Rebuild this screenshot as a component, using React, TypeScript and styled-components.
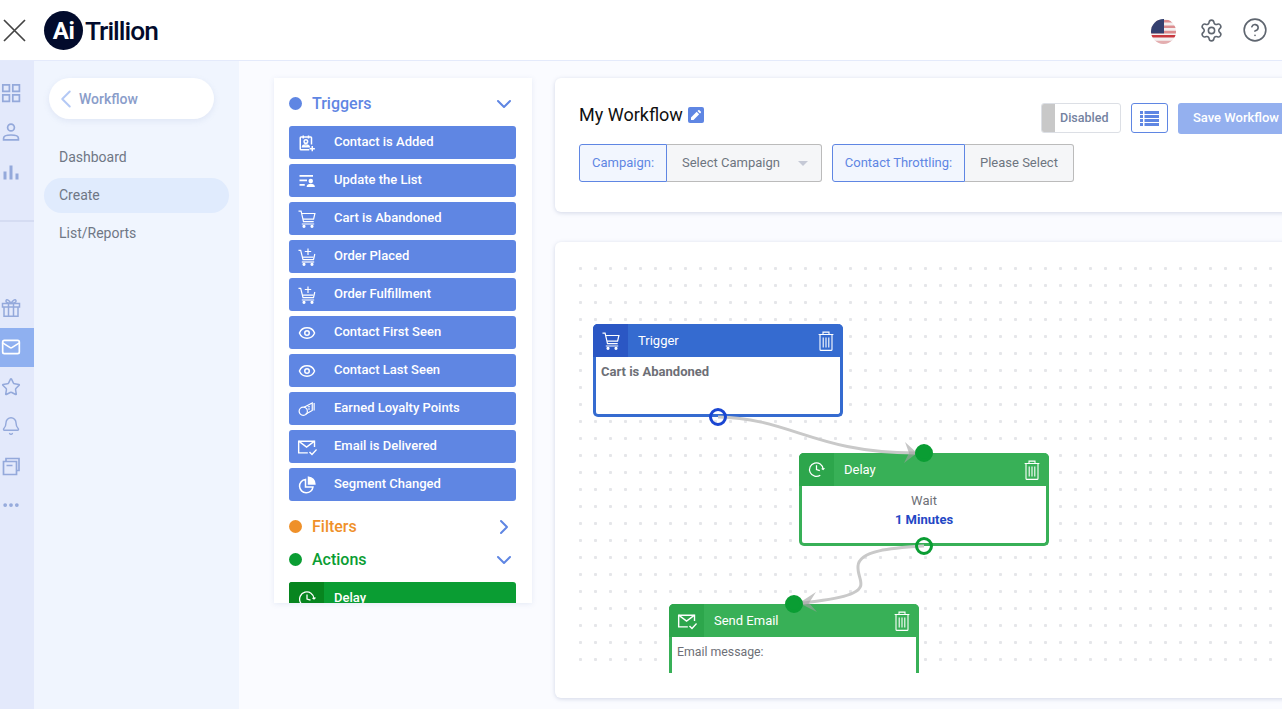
import React from "react";
import styled, { createGlobalStyle } from "styled-components";
import {
  Bell,
  ChevronDown,
  ChevronLeft,
  ChevronRight,
  CircleHelp,
  Eye,
  Mail,
  MoreHorizontal,
  Settings,
  Star,
} from "lucide-react";

const GlobalStyle = createGlobalStyle`
  html, body {
    margin: 0;
    height: 100%;
    overflow: hidden;
    background: #fafbff;
    font-family: Roboto, "Liberation Sans", sans-serif;
  }
  * {
    box-sizing: border-box;
  }
`;

const Page = styled.div`
  width: 1282px;
  height: 709px;
  display: flex;
  flex-direction: column;
  overflow: hidden;
`;

const Header = styled.header`
  height: 61px;
  flex: none;
  display: flex;
  align-items: center;
  padding: 0 14px 0 3px;
  background: #fff;
  border-bottom: 1px solid #e4eafb;
`;

const CloseButton = styled.span`
  display: flex;
  width: 23px;
  color: #444;
  margin-right: 18px;
`;

const Logo = styled.div`
  display: flex;
  align-items: center;
  flex: 1;
  padding-top: 1px;
`;

const LogoMark = styled.span`
  width: 39px;
  height: 39px;
  border-radius: 50%;
  background: #020b2c;
  color: #fff;
  font-size: 24px;
  font-weight: 700;
  letter-spacing: -0.5px;
  display: flex;
  align-items: center;
  justify-content: center;
`;

const LogoText = styled.span`
  font-size: 26.3px;
  font-weight: 500;
  letter-spacing: -1px;
  color: #020b2c;
  margin-left: 2px;
`;

const HeaderTools = styled.div`
  display: flex;
  align-items: center;
  gap: 18px;
  color: #5f6670;
`;

const FlagWrap = styled.span`
  display: flex;
  margin: 2px 5px 0 0;
`;

const Body = styled.div`
  flex: 1;
  display: flex;
  min-height: 0;
`;

const Rail = styled.nav`
  width: 34px;
  flex: none;
  background: #e3e9fb;
  padding-top: 12px;
  display: flex;
  flex-direction: column;
`;

const RailItem = styled.div<{ $active?: boolean }>`
  height: 39.5px;
  flex: none;
  display: flex;
  align-items: center;
  padding-left: 1px;
  color: ${(p) => (p.$active ? "#fff" : "#94a9db")};
  background: ${(p) => (p.$active ? "#8fb0f0" : "transparent")};
`;

const RailRule = styled.div`
  height: 2px;
  flex: none;
  margin: 28.500px 0 66px;
  background: #d5dcf2;
`;

const SubNav = styled.nav`
  width: 205px;
  flex: none;
  background: #f0f5fe;
  padding: 17px 10px 0;
  display: flex;
  flex-direction: column;
  gap: 3px;
`;

const BackPill = styled.div`
  height: 41px;
  margin: 0 15px 18px 5px;
  padding-left: 2px;
  display: flex;
  align-items: center;
  background: #fff;
  border-radius: 21px;
  box-shadow: 0 2px 6px rgba(120, 140, 190, 0.14);
  color: #8a9dca;
  font-size: 14px;
  font-weight: 500;

  svg {
    color: #b4c9f5;
    margin-right: -2px;
  }
`;

const NavItem = styled.div<{ $active?: boolean }>`
  height: 35px;
  padding: 0 0 2px 15px;
  display: flex;
  align-items: center;
  border-radius: 18px;
  font-size: 14px;
  color: #6f7785;
  background: ${(p) => (p.$active ? "#e0ebfd" : "transparent")};
`;

const Main = styled.main`
  flex: 1;
  min-width: 0;
  display: flex;
  align-items: flex-start;
  gap: 23px;
  padding: 17px 0 0 35px;
  background: #fafbff;
  overflow: hidden;
`;

const ToolPanel = styled.aside`
  width: 258px;
  height: 525px;
  flex: none;
  padding: 9px 16px 0 15px;
  background: #fff;
  box-shadow: 0 1px 5px rgba(120, 140, 190, 0.16);
  overflow: hidden;
`;

const GroupHeading = styled.div<{ $color: string }>`
  height: 33px;
  display: flex;
  align-items: center;
  gap: 10px;
  font-size: 16px;
  font-weight: 500;
  color: ${(p) => p.$color};

  > svg {
    margin-left: auto;
    color: #5f86e3;
  }
`;

const Dot = styled.span<{ $color: string }>`
  width: 13px;
  height: 13px;
  border-radius: 50%;
  background: ${(p) => p.$color};
`;

const ToolList = styled.div`
  display: flex;
  flex-direction: column;
  gap: 5px;
  margin: 6px 0 9px;
`;

const Tool = styled.div<{ $color: string }>`
  height: 33px;
  flex: none;
  display: flex;
  align-items: center;
  border-radius: 3px;
  overflow: hidden;
  background: ${(p) => p.$color};
  color: #fff;
  font-size: 13px;
  font-weight: 500;
`;

const ToolLabel = styled.span`
  margin-top: -2px;
`;

const ToolIcon = styled.span<{ $color?: string }>`
  width: 35px;
  height: 100%;
  flex: none;
  display: flex;
  align-items: center;
  justify-content: center;
  margin-right: 10px;
  background: ${(p) => p.$color || "transparent"};
`;

const Column = styled.div`
  width: 763px;
  flex: none;
  display: flex;
  flex-direction: column;
  gap: 30px;
`;

const Card = styled.section`
  background: #fff;
  border-radius: 6px;
  box-shadow: 0 1px 4px rgba(110, 125, 170, 0.28);
`;

const SettingsCard = styled(Card)`
  height: 134px;
  padding: 25px 24px 0;
`;

const SettingsTop = styled.div`
  height: 41px;
  display: flex;
  align-items: flex-start;
`;

const Title = styled.h1`
  margin: 1px 0 0;
  display: flex;
  align-items: center;
  gap: 5px;
  font-size: 18px;
  line-height: 22px;
  font-weight: 400;
  color: #111;
`;

const EditBadge = styled.span`
  width: 16px;
  height: 16px;
  border-radius: 2px;
  background: #5f86e3;
  color: #fff;
  display: flex;
  align-items: center;
  justify-content: center;
`;

const Actions = styled.div`
  margin-left: auto;
  display: flex;
  gap: 10px;
`;

const ToggleBox = styled.div`
  width: 80px;
  height: 30px;
  display: flex;
  align-items: center;
  gap: 5px;
  border: 1px solid #dcdfe5;
  border-radius: 3px;
  overflow: hidden;
  font-size: 12.5px;
  font-weight: 500;
  color: #74829f;
`;

const ToggleKnob = styled.span`
  width: 13px;
  height: 100%;
  background: #c8c8c8;
`;

const ToggleText = styled.span`
  margin-top: -2px;
`;

const ListButton = styled.div`
  width: 37px;
  height: 30px;
  display: flex;
  align-items: center;
  justify-content: center;
  border: 1px solid #5f86e3;
  border-radius: 3px;
  color: #5f86e3;
`;

const SaveButton = styled.div`
  width: 116px;
  height: 31px;
  padding-bottom: 2px;
  display: flex;
  align-items: center;
  justify-content: center;
  border-radius: 3px;
  background: #94b0ef;
  color: #fff;
  font-size: 13px;
  font-weight: 500;
`;

const FieldRow = styled.div`
  display: flex;
  gap: 10px;
`;

const Field = styled.div`
  height: 38px;
  display: flex;
  font-size: 13px;
`;

const FieldLabel = styled.div<{ $width: number }>`
  width: ${(p) => p.$width}px;
  display: flex;
  align-items: center;
  justify-content: center;
  padding-bottom: 2px;
  border: 1px solid #5f86e3;
  border-radius: 3px 0 0 3px;
  background: #f2f6fe;
  color: #5f86e3;
`;

const FieldValue = styled.div<{ $width: number }>`
  width: ${(p) => p.$width}px;
  display: flex;
  align-items: center;
  padding: 0 13px 2px 15px;
  border: 1px solid #bbb;
  border-left: 0;
  border-radius: 0 3px 3px 0;
  background: #f5f6f8;
  color: #6d7580;
`;

const Caret = styled.span`
  margin: 2px 0 0 auto;
  width: 0;
  height: 0;
  border-left: 5px solid transparent;
  border-right: 5px solid transparent;
  border-top: 5px solid #c5c9d6;
`;

const CanvasCard = styled(Card)`
  height: 456px;
  padding: 18px 0 25px 18px;
`;

const Canvas = styled.div`
  position: relative;
  height: 100%;
  overflow: hidden;
  background-image: radial-gradient(circle at 7.5px 8.5px, #e5e6e9 1.3px, transparent 1.9px);
  background-size: 15px 17px;
`;

const Edges = styled.svg`
  position: absolute;
  inset: 0;
  z-index: 2;
  pointer-events: none;
`;

const Node = styled.div<{ $x: number; $y: number; $color: string }>`
  position: absolute;
  left: ${(p) => p.$x}px;
  top: ${(p) => p.$y}px;
  width: 250px;
  height: 93px;
  border: 3px solid ${(p) => p.$color};
  border-top: 0;
  border-radius: 5px;
  background: #fff;
`;

const NodeHead = styled.div<{ $color: string }>`
  height: 33px;
  margin: 0 -3px;
  display: flex;
  align-items: center;
  padding-right: 9px;
  border-radius: 5px 5px 0 0;
  overflow: hidden;
  background: ${(p) => p.$color};
  color: #fff;
  font-size: 13px;
`;

const NodeIcon = styled.span<{ $color: string }>`
  width: 35px;
  height: 100%;
  flex: none;
  display: flex;
  align-items: center;
  justify-content: center;
  margin-right: 10px;
  background: ${(p) => p.$color};
`;

const NodeTitle = styled.span`
  flex: 1;
`;

const NodeBody = styled.div<{ $center?: boolean }>`
  padding: 5px;
  font-size: 13px;
  line-height: 19px;
  color: #6d6f76;
  text-align: ${(p) => (p.$center ? "center" : "left")};
`;

const NodeNote = styled.span`
  font-size: 12.3px;
`;

const Strong = styled.div<{ $color?: string }>`
  font-weight: 700;
  color: ${(p) => p.$color || "#6d6f76"};
`;

const Port = styled.span<{ $x: number; $y: number; $color: string; $hollow?: boolean }>`
  position: absolute;
  z-index: 3;
  left: ${(p) => p.$x - 9}px;
  top: ${(p) => p.$y - 9}px;
  width: 18px;
  height: 18px;
  border-radius: 50%;
  border: 3px solid ${(p) => p.$color};
  background: ${(p) => (p.$hollow ? "transparent" : p.$color)};
`;

const BLUE = "#5f86e3";
const GREEN = "#0a9d33";

const CloseIcon = () => (
  <svg width="23" height="23" viewBox="0 0 23 23" fill="none" stroke="currentColor" strokeWidth="1.7">
    <path d="M1 1l21 21M22 1 1 22" />
  </svg>
);

const Cart = () => (
  <svg width="18" height="18" viewBox="0 0 18 18" fill="none" stroke="currentColor" strokeWidth="1.2">
    <path d="M.5 1.200h2.600l2.400 10.400h10.200" />
    <path d="M3.700 3.500h13.200l-1.300 5.600H5" />
    <path d="M3.800 14h12.400" />
    <circle cx="6" cy="16.300" r="1" fill="currentColor" />
    <circle cx="14" cy="16.300" r="1" fill="currentColor" />
  </svg>
);

const CartPlus = () => (
  <svg width="18" height="18" viewBox="0 0 18 18" fill="none" stroke="currentColor" strokeWidth="1.2">
    <path d="M.5 2.400h2.200l2.300 9.200h10.500l1.300-5.600" />
    <path d="M4.500 9.200h11" />
    <path d="M3.800 14h12.400" />
    <circle cx="6" cy="16.300" r="1" fill="currentColor" />
    <circle cx="14" cy="16.300" r="1" fill="currentColor" />
    <path d="M10 .5v6.500M6.800 3.500h6.400" />
  </svg>
);

const ContactAdded = () => (
  <svg width="18" height="18" viewBox="0 0 24 24" fill="none" stroke="currentColor" strokeWidth="2">
    <path d="M15 21H4a1 1 0 0 1-1-1V5a1 1 0 0 1 1-1h13a1 1 0 0 1 1 1v9" />
    <path d="M7 2v4M14 2v4" />
    <circle cx="10.500" cy="10" r="2.400" />
    <path d="M6 17c.5-3 8-3 9 0z" />
    <path d="M19 16v7M15.500 19.500h7" />
  </svg>
);

const ListUser = () => (
  <svg width="18" height="18" viewBox="0 0 24 24" fill="currentColor">
    <path d="M2 4h18v2.400H2zM2 10h10v2.400H2zM2 16h7v2.400H2z" />
    <circle cx="17" cy="12" r="3" />
    <path d="M11.500 20c0-3.400 2.400-4.400 5.500-4.400s5.500 1 5.500 4.400z" />
  </svg>
);

const Loyalty = () => (
  <svg width="18" height="18" viewBox="0 0 24 24" fill="none" stroke="currentColor" strokeWidth="1.6">
    <circle cx="7" cy="15" r="5.500" />
    <path d="M8 9.600 19 4v10l-9 5" />
    <path d="M21.500 4v10M13 9h3M13 12h3" />
  </svg>
);

const MailCheckIcon = () => (
  <svg width="20" height="20" viewBox="0 0 24 24" fill="none" stroke="currentColor" strokeWidth="1.7">
    <path d="M13 19H2V5h19v7" />
    <path d="m2 5 9.500 7L21 5" />
    <path d="m15 18 3 3 5.500-6" />
  </svg>
);

const Segment = () => (
  <svg width="18" height="18" viewBox="0 0 24 24" fill="none" stroke="currentColor" strokeWidth="2">
    <path d="M10 4.500a9 9 0 1 0 10 10H10z" />
    <path d="M14 1.500a9 9 0 0 1 8.500 9H14z" fill="currentColor" />
  </svg>
);

const ClockArrow = ({ size = 18 }: { size?: number }) => (
  <svg width={size} height={size} viewBox="0 0 18 18" fill="none" stroke="currentColor" strokeWidth="1.300">
    <path d="M16 8.500A7.200 7.200 0 1 0 13 15" />
    <path d="M9 4.500V9l3.500 1.200" />
    <path d="m14.500 8 1.500 1 1.400-1.500" />
  </svg>
);

const Trash = () => (
  <svg width="16" height="20" viewBox="0 0 16 20" fill="none" stroke="currentColor" strokeWidth="1.100">
    <path d="M.6 3.500h14.800M5 3.200V1.100h6v2.100" />
    <path d="M2 3.500v14.900a1 1 0 0 0 1 1h10a1 1 0 0 0 1-1V3.500" />
    <path d="M5.200 6.500v10M8 6.500v10M10.800 6.500v10" />
  </svg>
);

const Pencil = () => (
  <svg width="10" height="10" viewBox="0 0 12 12" fill="currentColor">
    <path d="M0 12V9l6.800-6.800 3 3L3 12zM7.800 1.200 8.700.3a1 1 0 0 1 1.400 0l1.600 1.600a1 1 0 0 1 0 1.400l-.9.900z" />
  </svg>
);

const ListLines = () => (
  <svg width="19" height="15" viewBox="0 0 19 15" fill="currentColor">
    <path d="M0 0h3v3H0zM4.500 0H19v3H4.500zM0 4h3v3H0zM4.500 4H19v3H4.500zM0 8h3v3H0zM4.500 8H19v3H4.500zM0 12h3v3H0zM4.500 12H19v3H4.500z" />
  </svg>
);

const RailGrid = () => (
  <svg width="20" height="20" viewBox="0 0 20 20" fill="none" stroke="currentColor" strokeWidth="1.700">
    <path d="M1.800 1.800h6.600v6.600H1.800zM11.800 1.800h6.600v6.600h-6.600zM1.800 11.800h6.600v6.600H1.800zM11.800 11.800h6.600v6.600h-6.600z" />
  </svg>
);

const RailUser = () => (
  <svg width="20" height="20" viewBox="0 0 20 20" fill="none" stroke="currentColor" strokeWidth="1.700">
    <circle cx="10" cy="5.500" r="3.400" />
    <path d="M2.600 17.800v-1.600c0-2.200 3-3.200 7.400-3.200s7.400 1 7.400 3.200v1.600z" />
  </svg>
);

const RailBars = () => (
  <svg width="20" height="20" viewBox="0 0 20 20" fill="currentColor">
    <path d="M2.500 9.500h3v8h-3zM8.500 3.500h3v14h-3zM14.500 11.500h3v6h-3z" />
  </svg>
);

const RailGift = () => (
  <svg width="20" height="20" viewBox="0 0 20 20" fill="none" stroke="currentColor" strokeWidth="1.500">
    <path d="M1.500 5.500h17v3.500h-17zM3 9v9.300h14V9M7.500 5.500v12.800M12.500 5.500v12.800" />
    <path d="M10 5.500C8.500 2 5.500 .9 5 2.600S7 5.500 10 5.500c1.500-3.500 4.500-4.600 5-2.900S13 5.500 10 5.500" />
  </svg>
);

const RailCopy = () => (
  <svg width="20" height="20" viewBox="0 0 20 20" fill="none" stroke="currentColor" strokeWidth="1.700">
    <path d="M2.500 5.500h13v13h-13zM5 5.500V2.500h13v12h-2.500M5.500 9.500h6" />
  </svg>
);

const Flag = () => (
  <svg width="25" height="25" viewBox="0 0 25 25">
    <clipPath id="flagClip">
      <circle cx="12.500" cy="12.500" r="12.500" />
    </clipPath>
    <g clipPath="url(#flagClip)">
      <rect width="25" height="25" fill="#f4f0f0" />
      <path d="M0 1h25v2.600H0zM0 6.400h25V9H0zM0 11.800h25v2.600H0z" fill="#dc8d8f" />
      <path d="M0 16h25v2.400H0z" fill="#c8383f" />
      <path d="M0 21.800h25V25H0z" fill="#e4aeb0" />
      <rect width="13" height="14.400" fill="#35406f" />
    </g>
  </svg>
);

const triggers: [React.ReactNode, string][] = [
  [<ContactAdded />, "Contact is Added"],
  [<ListUser />, "Update the List"],
  [<Cart />, "Cart is Abandoned"],
  [<CartPlus />, "Order Placed"],
  [<CartPlus />, "Order Fulfillment"],
  [<Eye size={18} />, "Contact First Seen"],
  [<Eye size={18} />, "Contact Last Seen"],
  [<Loyalty />, "Earned Loyalty Points"],
  [<MailCheckIcon />, "Email is Delivered"],
  [<Segment />, "Segment Changed"],
];

const railTop = [<RailGrid />, <RailUser />, <RailBars />];

const railBottom: [React.ReactNode, boolean][] = [
  [<RailGift />, false],
  [<Mail size={20} strokeWidth={2} />, true],
  [<Star size={20} strokeWidth={1.800} />, false],
  [<Bell size={20} strokeWidth={1.700} />, false],
  [<RailCopy />, false],
  [<MoreHorizontal size={20} strokeWidth={2.500} />, false],
];

export default function App() {
  return (
    <Page>
      <GlobalStyle />
      <Header>
        <CloseButton>
          <CloseIcon />
        </CloseButton>
        <Logo>
          <LogoMark>Ai</LogoMark>
          <LogoText>Trillion</LogoText>
        </Logo>
        <HeaderTools>
          <FlagWrap>
            <Flag />
          </FlagWrap>
          <Settings size={25} strokeWidth={1.500} />
          <CircleHelp size={26} strokeWidth={1.500} />
        </HeaderTools>
      </Header>
      <Body>
        <Rail>
          {railTop.map((icon, i) => (
            <RailItem key={i}>{icon}</RailItem>
          ))}
          <RailRule />
          {railBottom.map(([icon, active], i) => (
            <RailItem key={i} $active={active}>
              {icon}
            </RailItem>
          ))}
        </Rail>
        <SubNav>
          <BackPill>
            <ChevronLeft size={30} strokeWidth={1.600} />
            Workflow
          </BackPill>
          <NavItem>Dashboard</NavItem>
          <NavItem $active>Create</NavItem>
          <NavItem>List/Reports</NavItem>
        </SubNav>
        <Main>
          <ToolPanel>
            <GroupHeading $color={BLUE}>
              <Dot $color={BLUE} />
              Triggers
              <ChevronDown size={24} strokeWidth={2} />
            </GroupHeading>
            <ToolList>
              {triggers.map(([icon, label]) => (
                <Tool key={label} $color={BLUE}>
                  <ToolIcon>{icon}</ToolIcon>
                  <ToolLabel>{label}</ToolLabel>
                </Tool>
              ))}
            </ToolList>
            <GroupHeading $color="#ef9029">
              <Dot $color="#ef9029" />
              Filters
              <ChevronRight size={24} strokeWidth={2} />
            </GroupHeading>
            <GroupHeading $color={GREEN}>
              <Dot $color={GREEN} />
              Actions
              <ChevronDown size={24} strokeWidth={2} />
            </GroupHeading>
            <ToolList>
              <Tool $color={GREEN}>
                <ToolIcon $color="#07851f">
                  <ClockArrow />
                </ToolIcon>
                <ToolLabel>Delay</ToolLabel>
              </Tool>
            </ToolList>
          </ToolPanel>
          <Column>
            <SettingsCard>
              <SettingsTop>
                <Title>
                  My Workflow
                  <EditBadge>
                    <Pencil />
                  </EditBadge>
                </Title>
                <Actions>
                  <ToggleBox>
                    <ToggleKnob />
                    <ToggleText>Disabled</ToggleText>
                  </ToggleBox>
                  <ListButton>
                    <ListLines />
                  </ListButton>
                  <SaveButton>Save Workflow</SaveButton>
                </Actions>
              </SettingsTop>
              <FieldRow>
                <Field>
                  <FieldLabel $width={88}>Campaign:</FieldLabel>
                  <FieldValue $width={155}>
                    Select Campaign
                    <Caret />
                  </FieldValue>
                </Field>
                <Field>
                  <FieldLabel $width={133}>Contact Throttling:</FieldLabel>
                  <FieldValue $width={109}>Please Select</FieldValue>
                </Field>
              </FieldRow>
            </SettingsCard>
            <CanvasCard>
              <Canvas>
                <Node $x={20} $y={64} $color="#356bd0">
                  <NodeHead $color="#356bd0">
                    <NodeIcon $color="#2b57c4">
                      <Cart />
                    </NodeIcon>
                    <NodeTitle>Trigger</NodeTitle>
                    <Trash />
                  </NodeHead>
                  <NodeBody>
                    <Strong>Cart is Abandoned</Strong>
                  </NodeBody>
                </Node>
                <Node $x={226} $y={193} $color="#38b057">
                  <NodeHead $color="#38b057">
                    <NodeIcon $color="#2da64c">
                      <ClockArrow size={17} />
                    </NodeIcon>
                    <NodeTitle>Delay</NodeTitle>
                    <Trash />
                  </NodeHead>
                  <NodeBody $center>
                    Wait
                    <Strong $color="#2347c5">1 Minutes</Strong>
                  </NodeBody>
                </Node>
                <Node $x={96} $y={344} $color="#38b057">
                  <NodeHead $color="#38b057">
                    <NodeIcon $color="#2da64c">
                      <MailCheckIcon />
                    </NodeIcon>
                    <NodeTitle>Send Email</NodeTitle>
                    <Trash />
                  </NodeHead>
                  <NodeBody>
                    <NodeNote>Email message:</NodeNote>
                  </NodeBody>
                </Node>
                <Edges width="710" height="413" viewBox="0 0 710 413" fill="none">
                  <path d="M145 157C217 158 242 193 342 193" stroke="#c9c9c9" strokeWidth="3" />
                  <path d="M332 182 344 193 331 203 336 193z" fill="rgba(160,160,160,0.6)" />
                  <path
                    d="M351 286C320 288 286 290 285 306C284 318 295 326 280 333C268 339 250 340 230 343"
                    stroke="#c9c9c9"
                    strokeWidth="3"
                  />
                  <path d="M243 332 226 343 244 352 236 343z" fill="rgba(160,160,160,0.6)" />
                </Edges>
                <Port $x={145} $y={157} $color="#1a46d2" $hollow />
                <Port $x={351} $y={193} $color={GREEN} />
                <Port $x={351} $y={286} $color={GREEN} $hollow />
                <Port $x={221} $y={344} $color={GREEN} />
              </Canvas>
            </CanvasCard>
          </Column>
        </Main>
      </Body>
    </Page>
  );
}
